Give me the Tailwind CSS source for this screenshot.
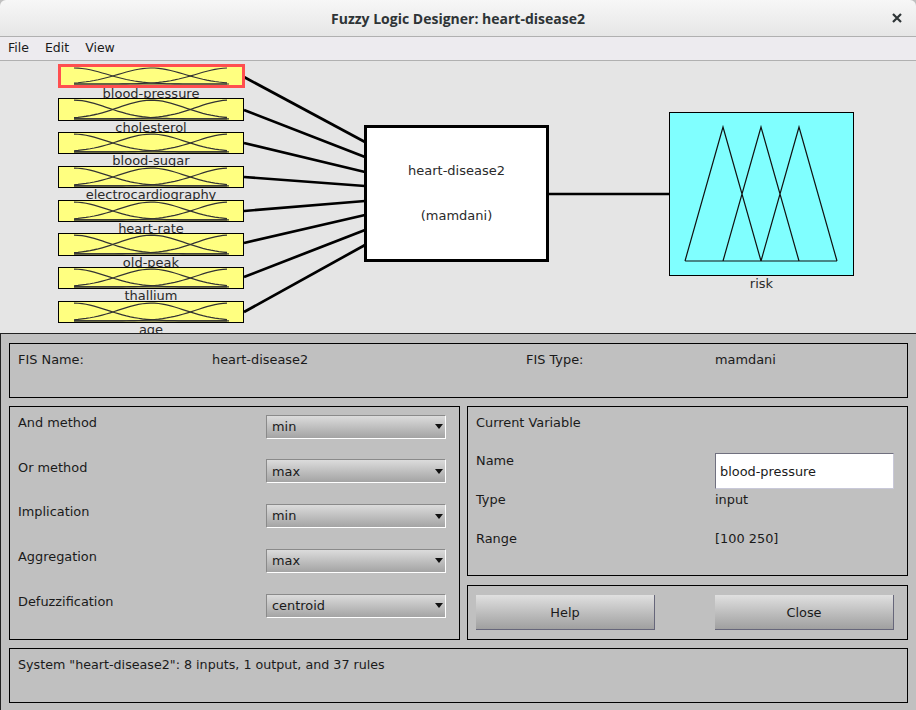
<!DOCTYPE html>
<html lang="en">
<head>
  <meta charset="UTF-8" />
  <title>Fuzzy Logic Designer: heart-disease2</title>
  <script src="https://cdn.jsdelivr.net/npm/@tailwindcss/browser@4"></script>
</head>
<body class="bg-[#c0c0c0] font-['DejaVu_Sans',sans-serif] text-[12.9px] text-[#1a1a1a]">
<div class="w-[916px] h-[710px] flex flex-col overflow-hidden">

  <!-- Title bar -->
  <div class="h-[37px] shrink-0 relative flex items-center justify-center bg-gradient-to-b from-[#f7f7f7] to-[#e6e6e6] border-b border-[#b0b0b0] rounded-t-[6px]">
    <span class="font-['Open_Sans',sans-serif] font-bold text-[14px] text-[#2e3436]">Fuzzy Logic Designer: heart-disease2</span>
    <svg class="absolute right-[14px] top-[13px] w-[10px] h-[10px]" viewBox="0 0 10 10"><path d="M1 1 L9 9 M9 1 L1 9" stroke="#2e3436" stroke-width="2.2" fill="none"/></svg>
  </div>

  <!-- Menu bar -->
  <div class="h-[24px] shrink-0 flex items-center gap-[16px] pl-[8px] bg-[#edebef] border-b border-[#b0b0b0] text-[12.5px]">
    <span>File</span><span>Edit</span><span>View</span>
  </div>

  <!-- Diagram -->
  <div id="canvas" class="h-[272px] shrink-0 relative bg-[#e5e5e5] overflow-hidden text-[13px] text-[#2a2a2a]">
    <svg class="absolute inset-0 w-[916px] h-[272px]" viewBox="0 61 916 272">
      <g stroke="#000" stroke-width="2.7" fill="none">
        <path d="M244 77 L365 142"/>
        <path d="M244 110 L365 157"/>
        <path d="M244 143 L365 172"/>
        <path d="M244 177 L365 186"/>
        <path d="M244 211 L365 201"/>
        <path d="M244 243 L365 215"/>
        <path d="M244 277 L365 230"/>
        <path d="M244 312 L365 245"/>
        <path d="M549 194 L669 194"/>
      </g>
    </svg>

    <!-- System block -->
    <div class="absolute left-[364px] top-[64px] w-[185px] h-[137px] pb-[1px] bg-white border-[3px] border-black flex flex-col items-center justify-center gap-[26px]">
      <span>heart-disease2</span>
      <span>(mamdani)</span>
    </div>

    <!-- Output block -->
    <div class="absolute left-[669px] top-[51px] w-[185px] h-[164px] bg-[#80ffff] border border-black">
      <svg class="w-[183px] h-[162px]" viewBox="670 113 183 162">
        <path d="M685 261 L723 127 L761 261 M723 261 L761 127 L799 261 M761 261 L799 127 L837 261 M685 261 L837 261" fill="none" stroke="#111" stroke-width="1.2"/>
      </svg>
    </div>
    <div class="absolute left-[669px] top-[213px] w-[185px] text-center">risk</div>
  </div>

  <!-- Controls -->
  <div class="flex-1 border-t border-[#222] border-l pt-[9px] pl-[8px] pr-[8px] flex flex-col gap-[8px]">
    <div class="h-[55px] shrink-0 border border-black flex pl-[8px] pt-[6px]">
      <span class="w-[194px]">FIS Name:</span>
      <span class="w-[314px]">heart-disease2</span>
      <span class="w-[189px]">FIS Type:</span>
      <span>mamdani</span>
    </div>

    <div class="flex gap-[7px] h-[234px] shrink-0">
      <div class="w-[451px] border border-black pl-[8px] pr-[13px] pt-[6px] flex flex-col gap-[21.7px]">
        <div class="h-[23px] flex justify-between"><span>And method</span><div class="w-[180px] h-[24px] mt-[1.8px] flex items-center justify-between pl-[5px] pr-[2px] bg-gradient-to-b from-[#dcdcdc] to-[#a4a4a4] border border-[#8a8a8a] border-r-white border-b-white">min<svg class="w-[8px] h-[5px]" viewBox="0 0 8 5"><path d="M0 0H8L4 5Z" fill="#111"/></svg></div></div>
        <div class="h-[23px] flex justify-between"><span>Or method</span><div class="w-[180px] h-[24px] mt-[1.8px] flex items-center justify-between pl-[5px] pr-[2px] bg-gradient-to-b from-[#dcdcdc] to-[#a4a4a4] border border-[#8a8a8a] border-r-white border-b-white">max<svg class="w-[8px] h-[5px]" viewBox="0 0 8 5"><path d="M0 0H8L4 5Z" fill="#111"/></svg></div></div>
        <div class="h-[23px] flex justify-between"><span>Implication</span><div class="w-[180px] h-[24px] mt-[1.8px] flex items-center justify-between pl-[5px] pr-[2px] bg-gradient-to-b from-[#dcdcdc] to-[#a4a4a4] border border-[#8a8a8a] border-r-white border-b-white">min<svg class="w-[8px] h-[5px]" viewBox="0 0 8 5"><path d="M0 0H8L4 5Z" fill="#111"/></svg></div></div>
        <div class="h-[23px] flex justify-between"><span>Aggregation</span><div class="w-[180px] h-[24px] mt-[1.8px] flex items-center justify-between pl-[5px] pr-[2px] bg-gradient-to-b from-[#dcdcdc] to-[#a4a4a4] border border-[#8a8a8a] border-r-white border-b-white">max<svg class="w-[8px] h-[5px]" viewBox="0 0 8 5"><path d="M0 0H8L4 5Z" fill="#111"/></svg></div></div>
        <div class="h-[23px] flex justify-between"><span>Defuzzification</span><div class="w-[180px] h-[24px] mt-[1.8px] flex items-center justify-between pl-[5px] pr-[2px] bg-gradient-to-b from-[#dcdcdc] to-[#a4a4a4] border border-[#8a8a8a] border-r-white border-b-white">centroid<svg class="w-[8px] h-[5px]" viewBox="0 0 8 5"><path d="M0 0H8L4 5Z" fill="#111"/></svg></div></div>
      </div>

      <div class="w-[441px] flex flex-col gap-[9px]">
        <div class="h-[170px] shrink-0 border border-black pl-[8px] pr-[13px] pt-[6px] flex flex-col">
          <span class="h-[38px]">Current Variable</span>
          <div class="h-[39px] flex justify-between"><span>Name</span>
            <div class="w-[179px] h-[36px] mt-[2px] pt-[2px] flex items-center pl-[4px] bg-white border border-[#70707f] border-r-[#c8c8d8] border-b-[#c8c8d8]">blood-pressure</div>
          </div>
          <div class="h-[39px] flex"><span class="w-[239px]">Type</span><span>input</span></div>
          <div class="flex"><span class="w-[239px]">Range</span><span>[100 250]</span></div>
        </div>
        <div class="h-[55px] shrink-0 border border-black pl-[8px] pr-[13px] flex items-center justify-between">
          <div class="w-[179px] h-[35px] pt-[2px] flex items-center justify-center bg-gradient-to-b from-[#e0e0e0] to-[#a0a0a0] border-b border-r border-[#66667a]">Help</div>
          <div class="w-[179px] h-[35px] pt-[2px] flex items-center justify-center bg-gradient-to-b from-[#e0e0e0] to-[#a0a0a0] border-b border-r border-[#66667a]">Close</div>
        </div>
      </div>
    </div>

    <div class="h-[55px] shrink-0 border border-black pl-[8px] pt-[6px] text-[12.7px]">System "heart-disease2": 8 inputs, 1 output, and 37 rules</div>
  </div>
</div>

<script>
  // input blocks: [name, box top, box height] in canvas coordinates
  const inputs = [
    ["blood-pressure", 3, 24], ["cholesterol", 37, 23], ["blood-sugar", 71, 22],
    ["electrocardiography", 105, 22], ["heart-rate", 139, 22], ["old-peak", 172, 23],
    ["thallium", 206, 22], ["age", 240, 22]
  ];

  // three gaussian membership functions on the 154 wide icon
  function gauss(center) {
    let d = "";
    for (let x = 0; x <= 154; x += 4) {
      const y = 17 - 16 * Math.exp(-((x - center) ** 2) / (2 * 32.7 * 32.7));
      d += (x === 0 ? "M" : "L") + x + " " + y.toFixed(2) + " ";
    }
    return d;
  }
  const curves = [0, 77, 154].map(c => `<path d="${gauss(c)}"/>`).join("") + `<path d="M0 17 L154 17"/>`;

  const canvas = document.getElementById("canvas");
  inputs.forEach((item, i) => {
    const selected = i === 0;
    // label goes first so the next box paints over its lower edge
    const label = document.createElement("div");
    label.className = "absolute left-[58px] w-[186px] text-center leading-[15px] z-0";
    label.style.top = (item[1] + item[2] - (selected ? 2 : 1)) + "px";
    label.textContent = item[0];
    canvas.appendChild(label);

    const box = document.createElement("div");
    box.className = selected
      ? "absolute left-[58px] w-[187px] bg-[#ffff80] border-[3px] border-[#ff4f4f] z-10"
      : "absolute left-[58px] w-[186px] bg-[#ffff80] border border-black z-10";
    box.style.top = item[1] + "px";
    box.style.height = item[2] + "px";
    const svgClass = selected
      ? "absolute left-[13px] top-0 w-[155px] overflow-visible"
      : "absolute left-[15px] top-0 w-[155px] overflow-visible";
    box.innerHTML = `<svg class="${svgClass}" style="height:${selected ? 18 : item[2] - 2}px" viewBox="0 0 154 18" preserveAspectRatio="none">
      <g fill="none" stroke="#333" stroke-width="1.1">${curves}</g></svg>`;
    canvas.appendChild(box);
  });
</script>
</body>
</html>
